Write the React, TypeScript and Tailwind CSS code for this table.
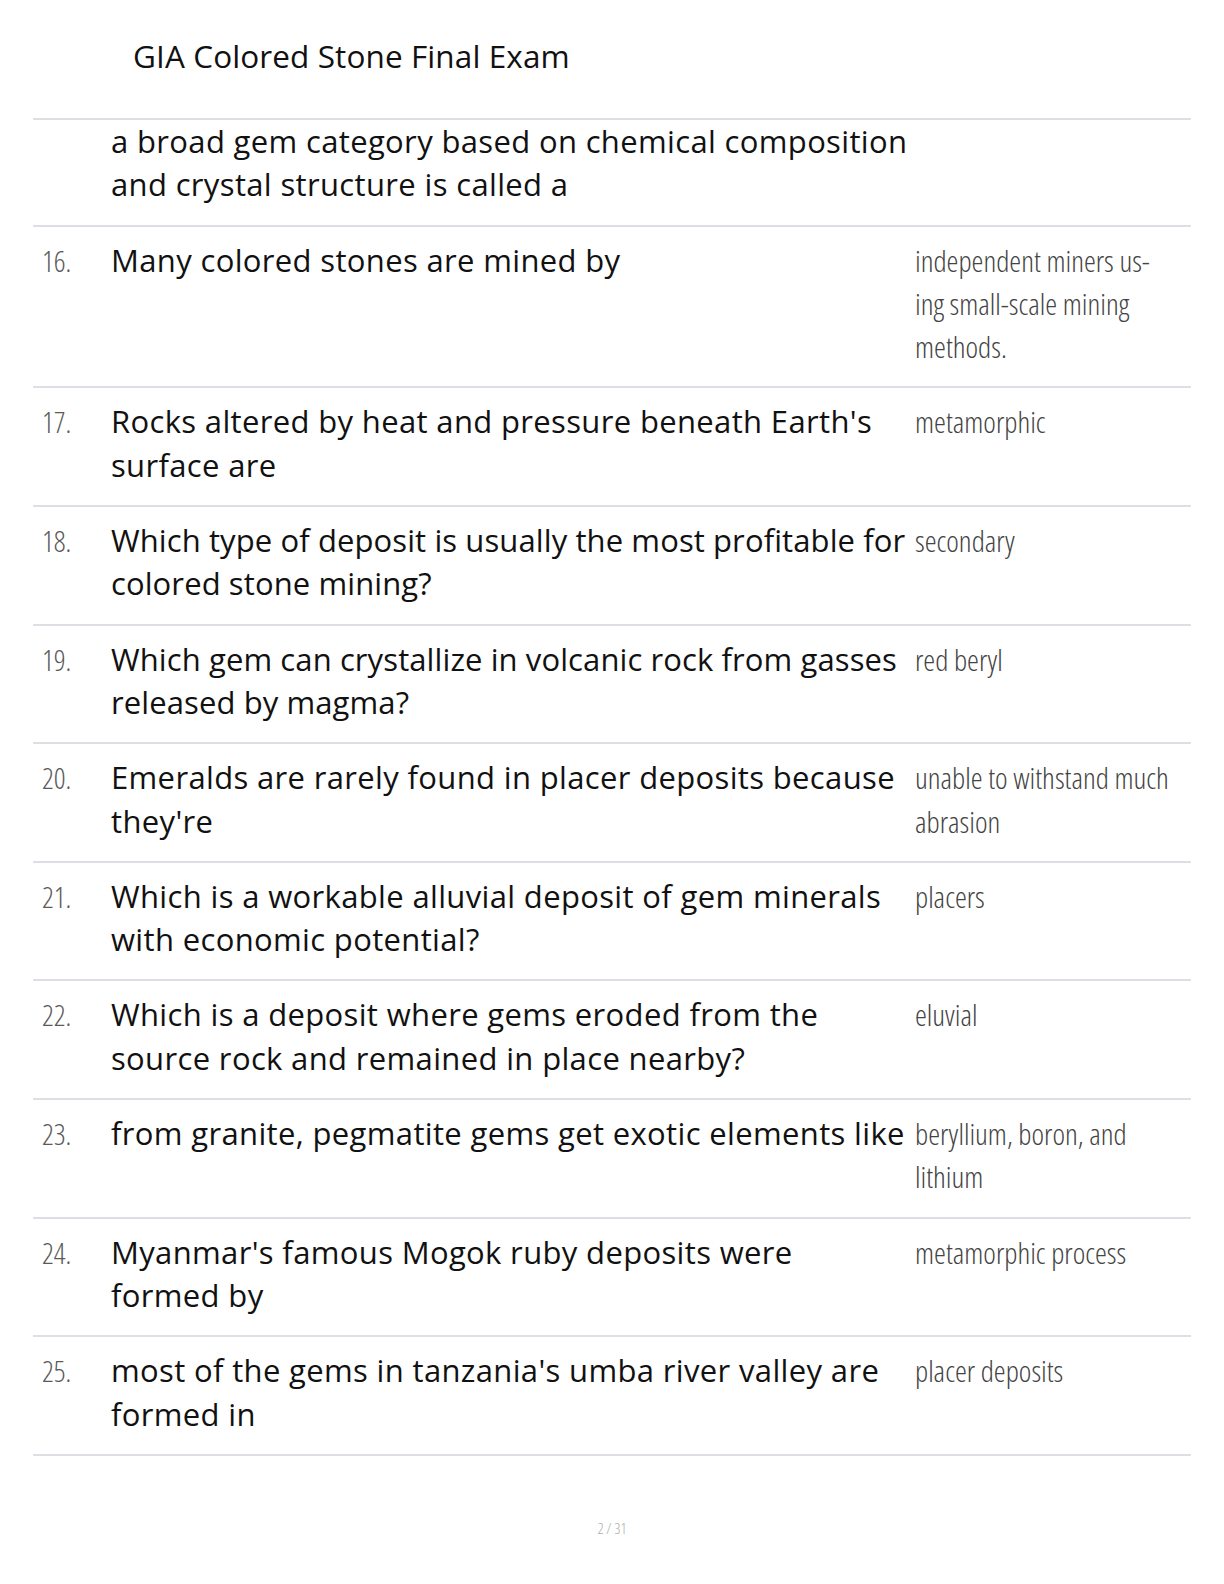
const rows: { num?: string; q: string[]; a: string[]; tight?: boolean }[] = [
  {
    q: ["a broad gem category based on chemical composition", "and crystal structure is called a"],
    a: [],
  },
  {
    num: "16.",
    q: ["Many colored stones are mined by"],
    a: ["independent miners us-", "ing small-scale mining", "methods."],
  },
  {
    num: "17.",
    q: ["Rocks altered by heat and pressure beneath Earth's", "surface are"],
    a: ["metamorphic"],
  },
  {
    num: "18.",
    q: ["Which type of deposit is usually the most profitable for", "colored stone mining?"],
    a: ["secondary"],
    tight: true,
  },
  {
    num: "19.",
    q: ["Which gem can crystallize in volcanic rock from gasses", "released by magma?"],
    a: ["red beryl"],
    tight: true,
  },
  {
    num: "20.",
    q: ["Emeralds are rarely found in placer deposits because", "they're"],
    a: ["unable to withstand much", "abrasion"],
  },
  {
    num: "21.",
    q: ["Which is a workable alluvial deposit of gem minerals", "with economic potential?"],
    a: ["placers"],
  },
  {
    num: "22.",
    q: ["Which is a deposit where gems eroded from the", "source rock and remained in place nearby?"],
    a: ["eluvial"],
  },
  {
    num: "23.",
    q: ["from granite, pegmatite gems get exotic elements like"],
    a: ["beryllium, boron, and", "lithium"],
  },
  {
    num: "24.",
    q: ["Myanmar's famous Mogok ruby deposits were", "formed by"],
    a: ["metamorphic process"],
  },
  {
    num: "25.",
    q: ["most of the gems in tanzania's umba river valley are", "formed in"],
    a: ["placer deposits"],
  },
];

function Row({ row, first }: { row: (typeof rows)[number]; first?: boolean }) {
  return (
    <div
      className={`flex border-t-2 border-[#dedee5] pb-[18px] ${first ? "pt-0" : "pt-3"}`}
    >
      <div className="w-[78px] shrink-0 pl-[9px] text-[29px] leading-[43.3px] font-light font-stretch-[75%] text-[#5a5a5a]">
        {row.num}
      </div>
      <div
        className={`w-[804px] shrink-0 text-[31px] leading-[43.3px] text-[#111] ${row.tight ? "tracking-[0.1px]" : "tracking-[0.35px]"}`}
      >
        {row.q.map((line) => (
          <div key={line} className="whitespace-nowrap">
            {line}
          </div>
        ))}
      </div>
      <div className="flex-1 text-[30px] leading-[43.3px] font-light font-stretch-[75%] text-[#444]">
        {row.a.map((line) => (
          <div key={line} className="whitespace-nowrap">
            {line}
          </div>
        ))}
      </div>
    </div>
  );
}

export default function App() {
  return (
    <div className="w-[1224px] min-h-[1584px] bg-white font-['Open_Sans','Noto_Sans',sans-serif]">
      <div className="h-[118px] pt-[36px] pl-[133px] text-[31.5px] leading-[40px] text-[#111] tracking-[0.1px]">
        GIA Colored Stone Final Exam
      </div>
      <div className="mx-[33px]">
        {rows.map((row, i) => (
          <Row key={i} row={row} first={i === 0} />
        ))}
        <div className="border-t-2 border-[#dedee5]" />
      </div>
      <div className="mt-[62px] text-center text-[15px] leading-[20px] font-light font-stretch-[75%] text-[#aaa]">
        2 / 31
      </div>
    </div>
  );
}
